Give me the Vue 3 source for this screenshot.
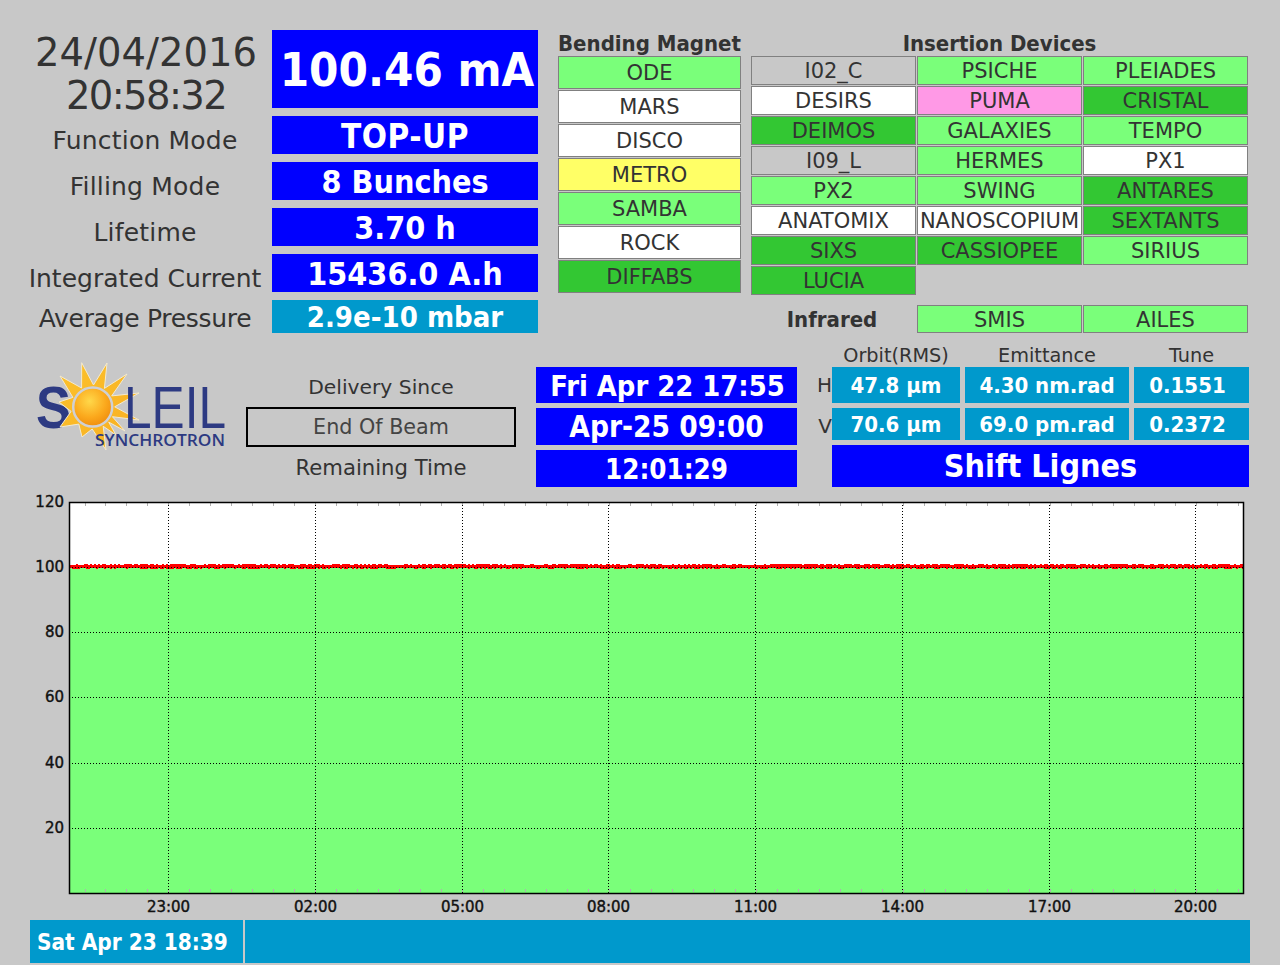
<template>
  <div class="page">
    <section class="top">
      <div class="status">
        <div class="clock">24/04/2016<br /><span class="clock-time">20:58:32</span></div>
        <div class="value blue main-value">100.46 mA</div>
        <template v-for="row in statusRows" :key="row.label">
          <div class="status-label" :class="row.labelClass">{{ row.label }}</div>
          <div class="value" :class="row.valueClass">{{ row.value }}</div>
        </template>
      </div>

      <div class="bending">
        <h2 class="group-title">Bending Magnet</h2>
        <div class="bending-list">
          <div v-for="b in bending" :key="b[0]" class="line" :class="b[1]">{{ b[0] }}</div>
        </div>
      </div>

      <div class="insertion">
        <h2 class="group-title">Insertion Devices</h2>
        <div class="insertion-grid">
          <div v-for="d in insertion" :key="d[0]" class="line" :class="d[1]">{{ d[0] }}</div>
        </div>
        <div class="infrared">
          <div class="infrared-label">Infrared</div>
          <div class="line green">SMIS</div>
          <div class="line green">AILES</div>
        </div>
      </div>
    </section>

    <section class="middle">
      <div class="logo">
        <svg width="216" height="144" viewBox="30 343 216 144">
          <defs>
            <radialGradient id="ball" cx="0.42" cy="0.35" r="0.7">
              <stop offset="0" stop-color="#ffd84a" />
              <stop offset="0.6" stop-color="#fba81c" />
              <stop offset="1" stop-color="#ee8a0c" />
            </radialGradient>
            <linearGradient id="rays" x1="0" y1="0" x2="1" y2="1">
              <stop offset="0" stop-color="#fcc22c" />
              <stop offset="1" stop-color="#f8ae22" />
            </linearGradient>
          </defs>
          <text x="36" y="428" class="logo-s" textLength="35" lengthAdjust="spacingAndGlyphs">S</text>
          <polygon :points="sunPoints" fill="url(#rays)" stroke="#f3ead0" stroke-width="1" />
          <circle cx="92.7" cy="407" r="19.5" fill="url(#ball)" stroke="#cfd0d4" stroke-width="2.5" />
          <text x="124" y="428" class="logo-leil" textLength="102" lengthAdjust="spacingAndGlyphs">LEIL</text>
          <text x="95" y="446" class="logo-sub" textLength="130" lengthAdjust="spacingAndGlyphs">SYNCHROTRON</text>
        </svg>
      </div>

      <div class="delivery">
        <div class="delivery-line">Delivery Since</div>
        <div class="delivery-line end-box">End Of Beam</div>
        <div class="delivery-line remaining">Remaining Time</div>
      </div>

      <div class="times">
        <div class="value blue t-a">Fri Apr 22 17:55</div>
        <div class="value blue t-b">Apr-25 09:00</div>
        <div class="value blue t-c">12:01:29</div>
      </div>

      <div class="machine">
        <div></div>
        <div class="col-head">Orbit(RMS)</div>
        <div class="col-head">Emittance</div>
        <div class="col-head">Tune</div>
        <div class="plane">H</div>
        <div class="value cyan m-val">47.8 µm</div>
        <div class="value cyan m-val">4.30 nm.rad</div>
        <div class="value cyan m-val tune">0.1551</div>
        <div class="plane">V</div>
        <div class="value cyan m-val">70.6 µm</div>
        <div class="value cyan m-val">69.0 pm.rad</div>
        <div class="value cyan m-val tune">0.2372</div>
        <div class="value blue shift">Shift Lignes</div>
      </div>
    </section>

    <svg class="chart" width="1220" height="428" viewBox="30 487 1220 428">
      <rect x="69" y="502" width="1175" height="391" fill="#fff" />
      <rect x="69" y="567" width="1175" height="326" fill="#7aff7a" />
      <g stroke="#b0b0b0" stroke-width="1">
        <line v-for="x in minorTicks" :key="'t' + x" :x1="x" :x2="x" y1="503" y2="506" />
        <line v-for="x in minorTicks" :key="'b' + x" :x1="x" :x2="x" y1="889" y2="892" />
      </g>
      <path :d="noisePath" stroke="#ff0000" stroke-width="1" fill="none" shape-rendering="crispEdges" />
      <g stroke="#000" stroke-width="1" shape-rendering="crispEdges">
        <line v-for="t in yTicks" :key="'h' + t.label" x1="69" x2="1244" :y1="t.y + 0.5" :y2="t.y + 0.5" stroke-dasharray="1 2" />
        <line v-for="t in xTicks" :key="'v' + t.label" :x1="t.x" :x2="t.x" y1="502" y2="893" stroke-dasharray="1 2" />
      </g>
      <rect x="69.5" y="502.5" width="1174" height="391" fill="none" stroke="#000" stroke-width="1.5" />
      <text v-for="t in yTicks" :key="'yl' + t.label" x="64" :y="t.y + 5" text-anchor="end" class="axis">{{ t.label }}</text>
      <text x="64" y="507" text-anchor="end" class="axis">120</text>
      <text v-for="t in xTicks" :key="'xl' + t.label" :x="t.x" y="912" text-anchor="middle" class="axis">{{ t.label }}</text>
    </svg>

    <footer class="bottom">
      <div class="value cyan bottom-date">Sat Apr 23 18:39</div>
      <div class="cyan bottom-msg"></div>
    </footer>
  </div>
</template>

<script setup>
const statusRows = [
  { label: 'Function Mode', value: 'TOP-UP', valueClass: 'blue v-top' },
  { label: 'Filling Mode', value: '8 Bunches', valueClass: 'blue v-mid' },
  { label: 'Lifetime', value: '3.70 h', valueClass: 'blue v-mid' },
  { label: 'Integrated Current', value: '15436.0 A.h', valueClass: 'blue v-mid', labelClass: 'wide' },
  { label: 'Average Pressure', value: '2.9e-10 mbar', valueClass: 'cyan v-small', labelClass: 'last' }
]

const bending = [
  ['ODE', 'green'], ['MARS', 'white'], ['DISCO', 'white'], ['METRO', 'yellow'],
  ['SAMBA', 'green'], ['ROCK', 'white'], ['DIFFABS', 'dark']
]

const insertion = [
  ['I02_C', 'grey'], ['PSICHE', 'green'], ['PLEIADES', 'green'],
  ['DESIRS', 'white'], ['PUMA', 'pink'], ['CRISTAL', 'dark'],
  ['DEIMOS', 'dark'], ['GALAXIES', 'green'], ['TEMPO', 'green'],
  ['I09_L', 'grey'], ['HERMES', 'green'], ['PX1', 'white'],
  ['PX2', 'green'], ['SWING', 'green'], ['ANTARES', 'dark'],
  ['ANATOMIX', 'white'], ['NANOSCOPIUM', 'white'], ['SEXTANTS', 'dark'],
  ['SIXS', 'dark'], ['CASSIOPEE', 'dark'], ['SIRIUS', 'green'],
  ['LUCIA', 'dark']
]

const yTicks = [100, 80, 60, 40, 20].map((v) => ({ label: v, y: Math.round(893 - v * 3.26) }))
const xPixels = [168, 315, 462, 608, 755, 902, 1049, 1195]
const xTicks = ['23:00', '02:00', '05:00', '08:00', '11:00', '14:00', '17:00', '20:00'].map((label, i) => ({
  label,
  x: xPixels[i] + 0.5
}))

const minorTicks = []
for (let x = 84.5; x < 1243; x += 20.98) minorTicks.push(Math.round(x) + 0.5)

// the current trace: a noisy line around 100.46 mA, with a fixed seed
let seed = 12345
function rnd() {
  seed = (seed * 1103515245 + 12345) % 2147483648
  return seed / 2147483648
}
let noise = ''
for (let x = 70; x < 1243; x += 2) {
  const top = 564 + Math.floor(rnd() * 1.6)
  const bottom = 568 + Math.floor(rnd() * 2)
  noise += `M${x + 0.5} ${top}V${bottom}M${x + 1.5} ${top}V${bottom}`
}
const noisePath = noise

// sun rays of the logo: tips read off the picture, valleys on a circle between them
const sunTips = [
  [81.7, 362.7], [107, 363], [127, 374], [139, 393], [139, 420], [125, 431],
  [116, 435], [106, 450], [82, 437], [60, 427], [59, 402], [60, 376]
]
const cx = 92.7
const cy = 407
const sunPoints = sunTips
  .map((tip, i) => {
    const next = sunTips[(i + 1) % sunTips.length]
    const a1 = Math.atan2(tip[1] - cy, tip[0] - cx)
    let a2 = Math.atan2(next[1] - cy, next[0] - cx)
    if (a2 < a1) a2 += Math.PI * 2
    const mid = (a1 + a2) / 2
    return `${tip[0]},${tip[1]} ${(cx + 22 * Math.cos(mid)).toFixed(1)},${(cy + 22 * Math.sin(mid)).toFixed(1)}`
  })
  .join(' ')
</script>

<style scoped>
.page {
  width: 1280px;
  height: 965px;
  box-sizing: border-box;
  padding: 30px 30px 0;
  overflow: hidden;
  background: #c8c8c8;
  color: #333;
  font-family: "DejaVu Sans", sans-serif;
}

.top {
  display: flex;
  height: 313px;
}

.status {
  width: 508px;
  margin-right: 20px;
  display: grid;
  grid-template-columns: 230px 266px;
  grid-template-rows: 78px 38px 38px 38px 38px 33px;
  column-gap: 12px;
  row-gap: 8px;
}

.clock {
  padding: 1px 0 0 2px;
  font-size: 38.5px;
  line-height: 43px;
  text-align: center;
  white-space: nowrap;
}

.clock-time {
  letter-spacing: -1.6px;
}

.status-label {
  display: flex;
  align-items: center;
  justify-content: center;
  padding-top: 11px;
  font-size: 25px;
  letter-spacing: 0.2px;
  white-space: nowrap;
}

.status-label.wide {
  letter-spacing: 0;
}

.status-label.last {
  padding-top: 3px;
  letter-spacing: -0.3px;
}

.value {
  display: flex;
  align-items: center;
  justify-content: center;
  color: #fff;
  font-family: "DejaVu Sans Condensed", "DejaVu Sans", sans-serif;
  font-weight: 700;
  white-space: nowrap;
}

.blue {
  background: #0000ff;
}

.cyan {
  background: #0099cc;
}

.main-value {
  padding-left: 4px;
  font-size: 47px;
}

.v-top {
  padding-top: 2px;
  font-size: 33px;
  letter-spacing: 0.5px;
}

.v-mid {
  padding-top: 2px;
  font-size: 32px;
}

.v-small {
  padding-top: 1px;
  font-size: 29px;
}

.bending {
  width: 183px;
  margin-right: 10px;
}

.group-title {
  margin: 0;
  height: 26px;
  font-family: "DejaVu Sans Condensed", "DejaVu Sans", sans-serif;
  font-size: 22px;
  line-height: 27px;
  font-weight: 700;
  text-align: center;
  white-space: nowrap;
}

.bending-list {
  display: flex;
  flex-direction: column;
  gap: 1px;
}

.bending-list .line {
  height: 33px;
}

.insertion {
  width: 497px;
}

.insertion-grid,
.infrared {
  display: grid;
  grid-template-columns: 165px 165px 165px;
  gap: 1px;
}

.insertion-grid {
  grid-auto-rows: 29px;
}

.infrared {
  margin-top: 10px;
  grid-auto-rows: 28px;
}

.infrared .line {
  padding-top: 1px;
}

.infrared-label {
  display: flex;
  align-items: center;
  justify-content: center;
  padding-right: 3px;
  font-family: "DejaVu Sans Condensed", "DejaVu Sans", sans-serif;
  font-weight: 700;
  font-size: 22px;
}

.line {
  display: flex;
  align-items: center;
  justify-content: center;
  box-sizing: border-box;
  border: 1px solid #808080;
  font-size: 21px;
  white-space: nowrap;
}

.green {
  background: #7aff7a;
}

.white {
  background: #fff;
}

.yellow {
  background: #ffff66;
}

.dark {
  background: #33c733;
}

.pink {
  background: #ff99e6;
}

.grey {
  background: #c8c8c8;
}

.middle {
  display: flex;
  height: 144px;
}

.logo {
  flex: none;
  width: 216px;
}

.logo svg {
  display: block;
}

.logo-s {
  font-family: "Liberation Sans", sans-serif;
  font-size: 59px;
  font-weight: 700;
  fill: #2d3a82;
}

.logo-leil {
  font-family: "Liberation Sans", sans-serif;
  font-size: 59px;
  fill: #2d3a82;
}

.logo-sub {
  font-family: "Open Sans", sans-serif;
  font-size: 16px;
  font-weight: 600;
  fill: #2d3a82;
}

.delivery {
  flex: none;
  width: 270px;
  margin: 24px 20px 0 0;
  display: flex;
  flex-direction: column;
}

.delivery-line {
  display: flex;
  align-items: center;
  justify-content: center;
  height: 40px;
  box-sizing: border-box;
  font-size: 20.3px;
}

.remaining {
  font-size: 21.2px;
}

.end-box {
  border: 2px solid #000;
  font-size: 20.7px;
  color: #444;
}

.times {
  flex: none;
  width: 261px;
  margin: 24px 15px 0 0;
  display: grid;
  grid-template-rows: 36px 37px 37px;
  row-gap: 5px;
}

.t-a {
  padding: 1px 0 0 2px;
  font-size: 28.8px;
}

.t-b {
  padding-top: 1px;
  font-size: 29.5px;
}

.t-c {
  font-size: 27.5px;
}

.machine {
  flex: none;
  display: grid;
  grid-template-columns: 15px 128px 164px 115px;
  grid-template-rows: 19px 36px 32px 42px;
  column-gap: 5px;
  row-gap: 5px;
}

.col-head {
  padding-top: 2px;
  font-size: 19.3px;
  line-height: 22px;
  text-align: center;
  white-space: nowrap;
}

.plane {
  margin-right: -5px;
  font-size: 20px;
  line-height: 36px;
  text-align: right;
}

.m-val {
  font-size: 22px;
}

.tune {
  padding-right: 8px;
}

.shift {
  grid-column: 2 / 5;
  font-size: 32px;
}

.chart {
  display: block;
}

.axis {
  font-family: "DejaVu Sans", sans-serif;
  font-size: 15px;
  fill: #111;
  stroke: #111;
  stroke-width: 0.4px;
}

.bottom {
  display: flex;
  gap: 2px;
  height: 43px;
  margin-top: 5px;
}

.bottom-date {
  width: 213px;
  box-sizing: border-box;
  padding-left: 7px;
  justify-content: flex-start;
  font-size: 22.4px;
}

.bottom-msg {
  width: 1005px;
}
</style>
